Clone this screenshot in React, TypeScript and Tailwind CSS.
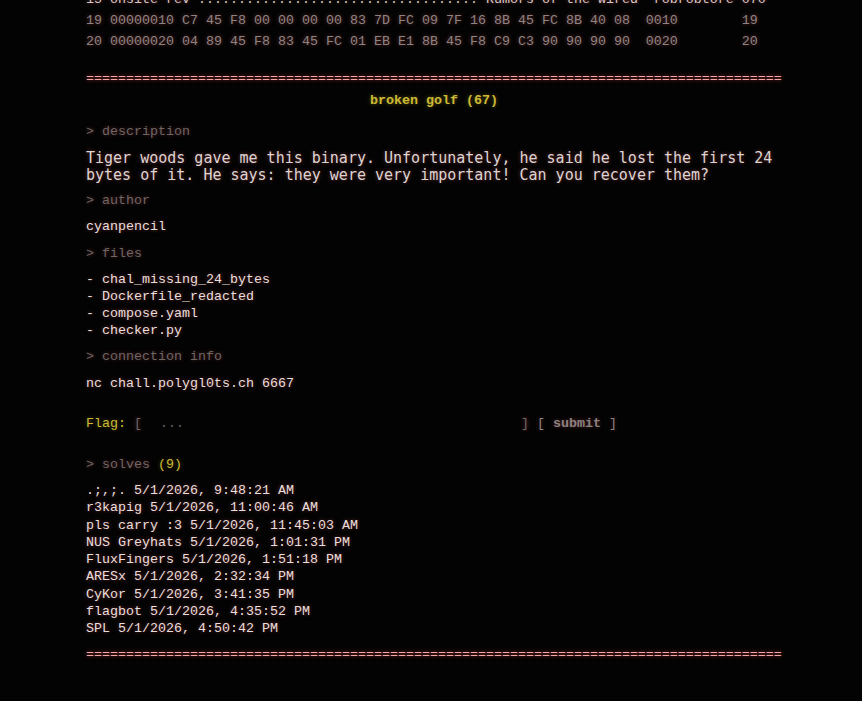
import React, { useState } from "react";

interface Solve {
  team: string;
  time: string;
}

const hexLines: string[] = [
  "15 onsite rev ................................... Rumors of the wired  robrobtore 070",
  "19 00000010 C7 45 F8 00 00 00 00 83 7D FC 09 7F 16 8B 45 FC 8B 40 08  0010        19",
  "20 00000020 04 89 45 F8 83 45 FC 01 EB E1 8B 45 F8 C9 C3 90 90 90 90  0020        20",
];

const files: string[] = [
  "chal_missing_24_bytes",
  "Dockerfile_redacted",
  "compose.yaml",
  "checker.py",
];

const solves: Solve[] = [
  { team: ".;,;.", time: "5/1/2026, 9:48:21 AM" },
  { team: "r3kapig", time: "5/1/2026, 11:00:46 AM" },
  { team: "pls carry :3", time: "5/1/2026, 11:45:03 AM" },
  { team: "NUS Greyhats", time: "5/1/2026, 1:01:31 PM" },
  { team: "FluxFingers", time: "5/1/2026, 1:51:18 PM" },
  { team: "ARESx", time: "5/1/2026, 2:32:34 PM" },
  { team: "CyKor", time: "5/1/2026, 3:41:35 PM" },
  { team: "flagbot", time: "5/1/2026, 4:35:52 PM" },
  { team: "SPL", time: "5/1/2026, 4:50:42 PM" },
];

const Rule: React.FC<{ className?: string }> = ({ className = "" }) => (
  <div
    className={`whitespace-pre leading-[17px] text-[#f2a6a6] [text-shadow:0_0_4px_rgba(255,90,90,0.7)] ${className}`}
  >
    {"=".repeat(87)}
  </div>
);

const Heading: React.FC<{ children: React.ReactNode; className?: string }> = ({
  children,
  className = "",
}) => (
  <div
    className={`leading-[17px] text-[#6e6565] [text-shadow:0_0_4px_rgba(255,110,110,0.35)] ${className}`}
  >
    {children}
  </div>
);

export default function App() {
  const [flag, setFlag] = useState("");

  return (
    <div className="min-h-[701px] overflow-hidden bg-[#030303] font-['Liberation_Mono',monospace] text-[13.33px] text-[#e9dede] [text-shadow:0_0_4px_rgba(255,110,110,0.45)]">
      <div className="ml-[86px] w-[696px]">
        {/* hexdump tail of the previous challenge */}
        <div className="-mt-[11px] whitespace-pre leading-[21px] text-[#8c8484]">
          {hexLines.map((l, i) => (
            <div key={i} className={i === 0 ? "text-[#d8c6c6]" : ""}>
              {l}
            </div>
          ))}
        </div>

        <Rule className="mt-[18px]" />

        <div className="mt-[5px] text-center font-bold leading-[17px] text-[#cdb934] [text-shadow:0_0_4px_rgba(220,200,60,0.4)]">
          broken golf (67)
        </div>

        <Heading className="mt-[14px]">&gt; description</Heading>
        <p className="mt-[10px] font-['DejaVu_Sans_Mono',monospace] text-[15px] leading-[17px] text-[#ddd4d4]">
          Tiger woods gave me this binary. Unfortunately, he said he lost the
          first 24 bytes of it. He says: they were very important! Can you
          recover them?
        </p>

        <Heading className="mt-[8px]">&gt; author</Heading>
        <div className="mt-[9px] leading-[17px]">cyanpencil</div>

        <Heading className="mt-[10px]">&gt; files</Heading>
        <ul className="mt-[9px] leading-[17px]">
          {files.map((f) => (
            <li key={f}>- {f}</li>
          ))}
        </ul>

        <Heading className="mt-[9px]">&gt; connection info</Heading>
        <div className="mt-[10px] leading-[17px]">nc chall.polygl0ts.ch 6667</div>

        <div className="mt-[23px] flex items-center whitespace-pre leading-[17px]">
          <span className="text-[#cdb934] [text-shadow:0_0_4px_rgba(220,200,60,0.35)]">Flag: </span>
          <span className="text-[#6e6565]">[ </span>
          <input
            value={flag}
            onChange={(e) => setFlag(e.target.value)}
            placeholder="..."
            className="h-[17px] w-[363px] bg-transparent pl-[10px] font-['Liberation_Mono',monospace] text-[13.33px] text-[#e9dede] outline-none placeholder:text-[#6a6262]"
          />
          <span className="text-[#6e6565]"> ] </span>
          <button className="cursor-pointer whitespace-pre text-[#8a8181] [text-shadow:0_0_4px_rgba(255,110,110,0.35)]">
            [ <span className="font-bold">submit</span> ]
          </button>
        </div>

        <Heading className="mt-[24px]">
          &gt; solves{" "}
          <span className="text-[#cdb934] [text-shadow:0_0_4px_rgba(220,200,60,0.35)]">
            ({solves.length})
          </span>
        </Heading>
        <ul className="mt-[9px] leading-[17.25px]">
          {solves.map((s) => (
            <li key={s.team}>
              {s.team} {s.time}
            </li>
          ))}
        </ul>

        <Rule className="mt-[9px]" />
      </div>
    </div>
  );
}
